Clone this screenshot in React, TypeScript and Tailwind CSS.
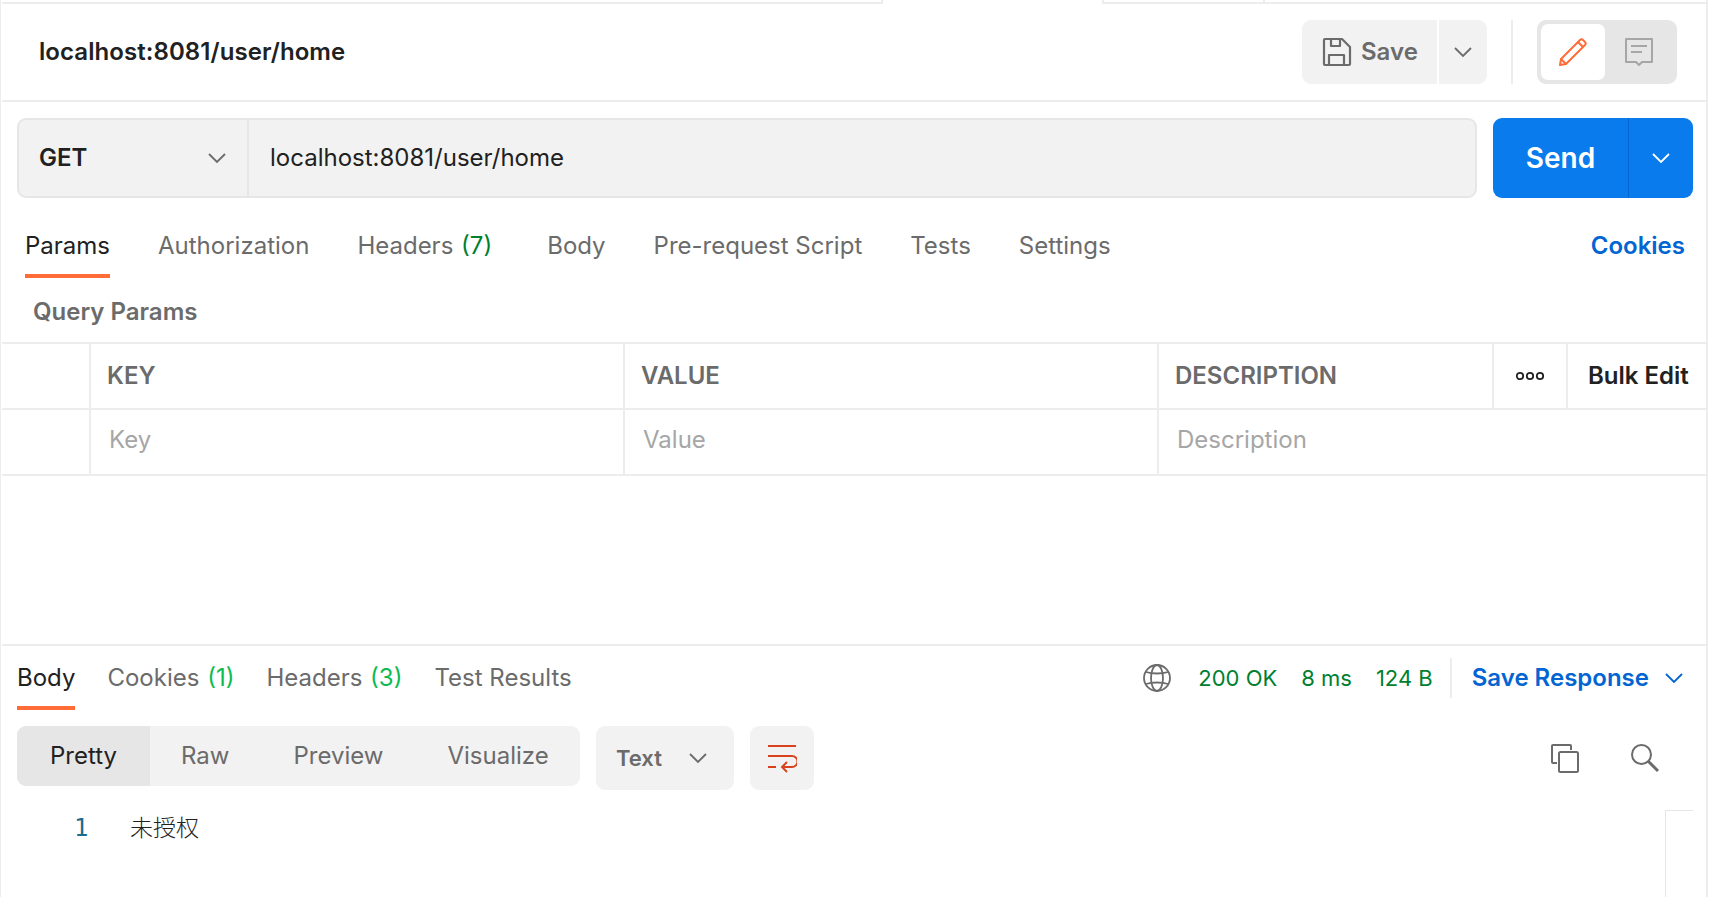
import type { ReactNode } from 'react'

const Chevron = ({ className = 'text-[#6b6b6b]' }: { className?: string }) => (
  <svg width="20" height="12" viewBox="0 0 20 12" fill="none" stroke="currentColor" strokeWidth="1.8" className={className}>
    <path d="M2 2l8 8 8-8" />
  </svg>
)

const SaveIcon = () => (
  <svg width="30" height="30" viewBox="0 0 30 30" fill="none" stroke="#6b6b6b" strokeWidth="2.2" strokeLinejoin="round">
    <path d="M2 3a1 1 0 0 1 1-1h17l8 8v17a1 1 0 0 1-1 1H3a1 1 0 0 1-1-1z" />
    <path d="M9 2v7h9V2M7 28V18h15v10" />
  </svg>
)

const PencilIcon = () => (
  <svg width="30" height="30" viewBox="0 0 30 30" fill="none" stroke="#ff6c37" strokeWidth="2" strokeLinejoin="round">
    <path d="M2 28l1-6L22 3a2 2 0 0 1 3 0l2 2a2 2 0 0 1 0 3L8 27z" />
    <path d="M20 5l5 5M3 22l5 5" />
  </svg>
)

const CommentIcon = () => (
  <svg width="30" height="30" viewBox="0 0 30 30" fill="none" stroke="#a6a6a6" strokeWidth="2" strokeLinejoin="round">
    <path d="M2 2h26v23H18l-3 3-3-3H2z" />
    <path d="M7 9h16M7 15h11" />
  </svg>
)

const GlobeIcon = () => (
  <svg width="30" height="30" viewBox="0 0 30 30" fill="none" stroke="#6b6b6b" strokeWidth="1.8">
    <circle cx="15" cy="15" r="13" />
    <ellipse cx="15" cy="15" rx="6" ry="13" />
    <path d="M4 9c6 2 16 2 22 0M4 21c6-2 16-2 22 0" />
  </svg>
)

const WrapIcon = () => (
  <svg width="30" height="30" viewBox="0 0 30 30" fill="none" stroke="#d8431e" strokeWidth="2">
    <path d="M1 3h28M1 13h24a4 4 0 0 1 0 11h-9M20 19l-5 5 5 5M1 24h8" />
  </svg>
)

const CopyIcon = () => (
  <svg width="30" height="30" viewBox="0 0 30 30" fill="none" stroke="#6b6b6b" strokeWidth="2" strokeLinejoin="round">
    <path d="M11 2H3a1 1 0 0 0-1 1v16a1 1 0 0 0 1 1h4" />
    <path d="M3 2h17a1 1 0 0 1 1 1v4" />
    <rect x="9" y="9" width="19" height="20" rx="1.5" />
  </svg>
)

const SearchIcon = () => (
  <svg width="30" height="30" viewBox="0 0 30 30" fill="none" stroke="#6b6b6b" strokeWidth="2">
    <circle cx="11.5" cy="11.5" r="9.5" />
    <path d="M18.5 18.5L28 28" strokeWidth="3" />
  </svg>
)

const Tab = ({ active, children, className = '' }: { active?: boolean; children: ReactNode; className?: string }) => (
  <div className={`relative ${active ? 'text-[#212121]' : 'text-[#6b6b6b]'} ${className}`}>
    {children}
    {active && <div className="absolute left-0 right-0 -bottom-[14px] h-[4px] bg-[#ff6c37]" />}
  </div>
)

const Cell = ({ w, children, className = '' }: { w: string; children?: ReactNode; className?: string }) => (
  <div className={`${w} shrink-0 h-full flex items-center border-r-2 border-[#ededed] ${className}`}>{children}</div>
)

export default function App() {
  return (
    <div className="w-[1721px] h-[897px] overflow-hidden bg-white text-[24px] [font-family:Inter,'Noto_Sans_CJK_SC',sans-serif]">
      <div className="w-[1708px] h-full pl-px border-l border-r-2 border-[#ededed] flex flex-col">
        {/* top tab strip edge */}
        <div className="h-[4px] shrink-0 flex">
          <div className="w-[881px] border-b-[2px] border-r-2 border-[#ededed]" />
          <div className="w-[219px]" />
          <div className="w-[163px] border-b-[2px] border-x-2 border-[#ededed]" />
          <div className="flex-1 border-b-[2px] border-[#ededed]" />
        </div>

        {/* request name */}
        <div className="h-[98px] shrink-0 flex items-center pl-[37px] border-b-2 border-[#ededed]">
          <div className="font-semibold text-[#212121] tracking-[0.07px]">localhost:8081/user/home</div>
          <div className="ml-auto mr-[29px] flex items-center">
            <div className="w-[135px] h-[64px] bg-[#f2f2f2] rounded-l-[9px] flex items-center pl-[20px] gap-[9px] font-semibold text-[#6b6b6b]">
              <SaveIcon />
              Save
            </div>
            <div className="w-[48px] h-[64px] ml-[2px] bg-[#f2f2f2] rounded-r-[9px] flex items-center justify-center">
              <Chevron />
            </div>
            <div className="w-[2px] h-[64px] mx-[24px] bg-[#ededed]" />
            <div className="w-[140px] h-[64px] bg-[#e6e6e6] rounded-[9px] flex items-center p-[4px]">
              <div className="w-[64px] h-[56px] bg-white rounded-[7px] flex items-center justify-center">
                <PencilIcon />
              </div>
              <div className="flex-1 flex items-center justify-center">
                <CommentIcon />
              </div>
            </div>
          </div>
        </div>

        {/* url bar */}
        <div className="h-[80px] mt-[16px] shrink-0 flex pl-[15px] pr-[13px]">
          <div className="flex-1 flex bg-[#f2f2f2] border-2 border-[#e6e6e6] rounded-[9px]">
            <div className="w-[230px] flex items-center justify-between pl-[20px] pr-[20px] border-r-2 border-[#e6e6e6] font-semibold text-[#212121]">
              GET
              <Chevron />
            </div>
            <div className="flex-1 flex items-center pl-[21px] text-[#212121]">localhost:8081/user/home</div>
          </div>
          <div className="w-[200px] ml-[16px] flex bg-[#097bed] rounded-[9px] text-white">
            <div className="w-[136px] flex items-center justify-center font-semibold text-[28px] border-r border-[#0265d2]">Send</div>
            <div className="flex-1 flex items-center justify-center">
              <Chevron className="text-white" />
            </div>
          </div>
        </div>

        {/* request tabs */}
        <div className="h-[29px] mt-[33px] mb-[1px] shrink-0 flex items-center pl-[23px] pr-[21px]">
          <Tab active>Params</Tab>
          <Tab className="ml-[48px]">Authorization</Tab>
          <Tab className="ml-[48px]">
            Headers <span className="text-[#007f31] ml-[1px]">(7)</span>
          </Tab>
          <Tab className="ml-[55px]">Body</Tab>
          <Tab className="ml-[48px]">Pre-request Script</Tab>
          <Tab className="ml-[48px]">Tests</Tab>
          <Tab className="ml-[48px]">Settings</Tab>
          <div className="ml-auto font-semibold text-[#0265d2]">Cookies</div>
        </div>

        <div className="mt-[36px] pl-[31px] h-[29px] flex items-center font-semibold text-[#6b6b6b] shrink-0">Query Params</div>

        {/* params table */}
        <div className="mt-[16px] shrink-0 border-y-2 border-[#ededed]">
          <div className="h-[64px] flex items-center font-semibold text-[#6b6b6b]">
            <Cell w="w-[89px]" />
            <Cell w="w-[534px]" className="pl-[16px]">KEY</Cell>
            <Cell w="w-[534px]" className="pl-[16px]">VALUE</Cell>
            <Cell w="w-[335px]" className="pl-[16px]">DESCRIPTION</Cell>
            <Cell w="w-[74px]" className="justify-center text-[#212121]">
              <svg width="30" height="10" viewBox="0 0 30 10" fill="none" stroke="#212121" strokeWidth="1.8">
                <circle cx="5" cy="5" r="3.2" />
                <circle cx="15" cy="5" r="3.2" />
                <circle cx="25" cy="5" r="3.2" />
              </svg>
            </Cell>
            <div className="flex-1 pl-[20px] text-[#212121]">Bulk Edit</div>
          </div>
          <div className="h-[66px] flex items-center border-t-2 border-[#ededed] text-[#a6a6a6]">
            <Cell w="w-[89px]" />
            <Cell w="w-[534px]" className="pl-[18px] pb-[5px]">Key</Cell>
            <Cell w="w-[534px]" className="pl-[18px] pb-[5px]">Value</Cell>
            <div className="flex-1 pl-[18px] pb-[5px]">Description</div>
          </div>
        </div>

        {/* response */}
        <div className="mt-[168px] shrink-0 border-t-2 border-[#ededed] h-[66px] flex items-center pl-[15px] pr-[22px]">
          <Tab active>Body</Tab>
          <Tab className="ml-[32px]">
            Cookies <span className="text-[#0cbb52] ml-[1px]">(1)</span>
          </Tab>
          <Tab className="ml-[32px]">
            Headers <span className="text-[#0cbb52] ml-[1px]">(3)</span>
          </Tab>
          <Tab className="ml-[32px]">Test Results</Tab>
          <div className="ml-auto flex items-center">
            <GlobeIcon />
            <span className="ml-[26px] text-[22px] text-[#007f31]">200&nbsp;OK</span>
            <span className="ml-[24px] text-[22px] text-[#007f31]">8 ms</span>
            <span className="ml-[24px] text-[22px] text-[#007f31]">124 B</span>
            <div className="w-[2px] h-[40px] ml-[17px] mr-[20px] bg-[#ededed]" />
            <span className="font-semibold text-[#0265d2]">Save Response</span>
            <Chevron className="ml-[15px] text-[#0265d2]" />
          </div>
        </div>

        <div className="mt-[16px] shrink-0 flex items-start pl-[15px] pr-[46px]">
          <div className="w-[563px] h-[60px] bg-[#f2f2f2] rounded-[9px] flex items-center overflow-hidden text-[#6b6b6b]">
            <div className="w-[133px] h-full bg-[#e6e6e6] flex items-center justify-center text-[#212121]">Pretty</div>
            <div className="ml-[31px]">Raw</div>
            <div className="ml-[64px]">Preview</div>
            <div className="ml-[64px]">Visualize</div>
          </div>
          <div className="w-[138px] h-[64px] ml-[16px] bg-[#f2f2f2] rounded-[9px] flex items-center pl-[20px] gap-[26px] font-semibold text-[22px] text-[#6b6b6b]">
            Text
            <Chevron />
          </div>
          <div className="w-[64px] h-[64px] ml-[16px] bg-[#f2f2f2] rounded-[9px] flex items-center justify-center">
            <WrapIcon />
          </div>
          <div className="ml-auto h-[64px] flex items-center gap-[50px]">
            <CopyIcon />
            <SearchIcon />
          </div>
        </div>

        {/* response body */}
        <div className="relative flex-1 flex pl-[72px] pt-[21px]">
          <div className="w-[56px] text-[#1d6b8c] text-[24px] leading-[34px] [font-family:'DejaVu_Sans_Mono',monospace]">1</div>
          <div className="text-[#212121] text-[23px] leading-[34px] font-light">未授权</div>
          <div className="absolute left-[1663px] top-[20px] w-[28px] h-[200px] border-l border-t border-[#e6e6e6]" />
        </div>
      </div>
    </div>
  )
}
